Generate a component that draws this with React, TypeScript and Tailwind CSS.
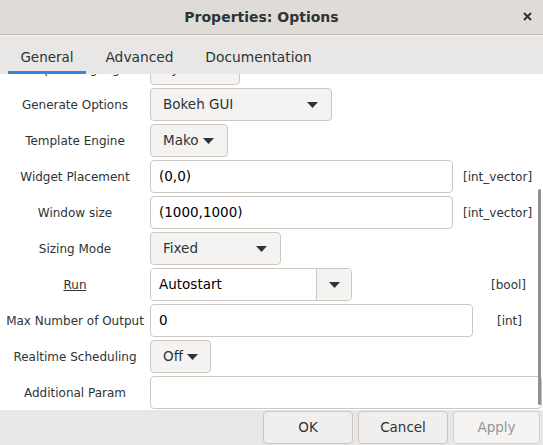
import React from 'react';

const font = { fontFamily: '"DejaVu Sans", Verdana, sans-serif' };

const Arrow = () => (
  <svg width="11" height="6" viewBox="0 0 11 6" className="shrink-0">
    <path d="M0 0h11L5.5 6z" fill="#2e3436" />
  </svg>
);

const Label = ({ children, underline }: { children: React.ReactNode; underline?: boolean }) => (
  <div className="w-[150px] shrink-0 text-center text-[12px] text-[#2e3436]">
    <span className={underline ? 'underline' : ''}>{children}</span>
  </div>
);

const Dropdown = ({ text, width, gap }: { text: string; width: string; gap?: boolean }) => (
  <div
    className={`${width} h-[33px] flex items-center ${gap ? 'justify-between pr-[13px]' : 'gap-[4px]'} pl-[12px] rounded-[4px] border border-[#cdc7c2] bg-[#f4f3f2] text-[13.5px] text-[#2e3436]`}
  >
    <span>{text}</span>
    <Arrow />
  </div>
);

const Entry = ({ text, width }: { text: string; width: string }) => (
  <div className={`${width} h-[33px] flex items-center pl-[8px] rounded-[4px] border border-[#cdc7c2] bg-white text-[13.5px] text-[#000]`}>
    {text}
  </div>
);

const TypeLabel = ({ children, className }: { children: React.ReactNode; className: string }) => (
  <span className={`text-[12px] text-[#2e3436] ${className}`}>{children}</span>
);

export default function App() {
  return (
    <div className="w-[543px] h-[445px] flex flex-col bg-white overflow-hidden" style={font}>
      {/* Title bar */}
      <div className="h-[35px] shrink-0 flex items-center justify-center relative pr-[20px] bg-[#dfdcd8] border-b border-[#bfbab5]">
        <span className="text-[14px] font-bold text-[#2e3436]">Properties: Options</span>
        <svg width="9" height="9" viewBox="0 0 9 9" className="absolute right-[11px] top-[12px]">
          <path d="M1 1l7 7M8 1L1 8" stroke="#2e3436" strokeWidth="2" />
        </svg>
      </div>

      {/* Tabs */}
      <div className="h-[39px] shrink-0 flex items-end px-[8px] bg-[#e8e7e5] border-t border-[#f4f3f2]">
        <div className="w-[78px] h-[38px] flex flex-col justify-between items-center">
          <span className="pt-[11px] text-[13.5px] text-[#2e3436]">General</span>
          <div className="w-full h-[3px] bg-[#3584e4]" />
        </div>
        <div className="w-[107px] h-[38px] flex justify-center">
          <span className="pt-[11px] text-[13.8px] text-[#2e3436]">Advanced</span>
        </div>
        <div className="w-[131px] h-[38px] flex justify-center">
          <span className="pt-[11px] text-[13.8px] text-[#2e3436]">Documentation</span>
        </div>
      </div>

      {/* Scrolled content */}
      <div className="flex-1 relative overflow-hidden">
        <div className="-mt-[22px] flex flex-col gap-[3px]">
          <div className="flex items-center">
            <Label>Output Language</Label>
            <Dropdown text="Python" width="w-[90px]" />
          </div>
          <div className="flex items-center">
            <Label>Generate Options</Label>
            <Dropdown text="Bokeh GUI" width="w-[182px]" gap />
          </div>
          <div className="flex items-center">
            <Label>Template Engine</Label>
            <Dropdown text="Mako" width="w-[78px]" />
          </div>
          <div className="flex items-center">
            <Label>Widget Placement</Label>
            <Entry text="(0,0)" width="w-[303px]" />
            <TypeLabel className="ml-[10px]">[int_vector]</TypeLabel>
          </div>
          <div className="flex items-center">
            <Label>Window size</Label>
            <Entry text="(1000,1000)" width="w-[303px]" />
            <TypeLabel className="ml-[10px]">[int_vector]</TypeLabel>
          </div>
          <div className="flex items-center">
            <Label>Sizing Mode</Label>
            <Dropdown text="Fixed" width="w-[131px]" gap />
          </div>
          <div className="flex items-center">
            <Label underline>Run</Label>
            <div className="w-[202px] h-[33px] flex rounded-[4px] border border-[#cdc7c2] overflow-hidden">
              <div className="flex-1 flex items-center pl-[8px] bg-white text-[13.5px] text-[#000]">Autostart</div>
              <div className="w-[35px] flex items-center justify-center bg-[#f4f3f2] border-l border-[#cdc7c2]">
                <Arrow />
              </div>
            </div>
            <TypeLabel className="ml-[139px]">[bool]</TypeLabel>
          </div>
          <div className="flex items-center">
            <Label>Max Number of Output</Label>
            <Entry text="0" width="w-[323px]" />
            <TypeLabel className="ml-[24px]">[int]</TypeLabel>
          </div>
          <div className="flex items-center">
            <Label>Realtime Scheduling</Label>
            <Dropdown text="Off" width="w-[61px]" />
          </div>
          <div className="flex items-center">
            <Label>Additional Param</Label>
            <Entry text="" width="w-[392px]" />
          </div>
        </div>
        {/* overlay scrollbar */}
        <div className="absolute right-[2px] top-[115px] w-[3px] h-[216px] rounded-full bg-[#8f8f8f]" />
      </div>

      {/* Action area */}
      <div className="h-[35px] shrink-0 flex items-center justify-end gap-[5px] pr-[3px] bg-[#e8e7e5]">
        <div className="w-[90px] h-[33px] flex items-center justify-center rounded-[4px] border border-[#cdc7c2] bg-[#f0efee] text-[13.5px] text-[#2e3436]">OK</div>
        <div className="w-[90px] h-[33px] flex items-center justify-center rounded-[4px] border border-[#cdc7c2] bg-[#f0efee] text-[13.5px] text-[#2e3436]">Cancel</div>
        <div className="w-[87px] h-[33px] flex items-center justify-center rounded-[4px] border border-[#d5d0cc] bg-[#f4f3f2] text-[13.5px] text-[#929595]">Apply</div>
      </div>
    </div>
  );
}
